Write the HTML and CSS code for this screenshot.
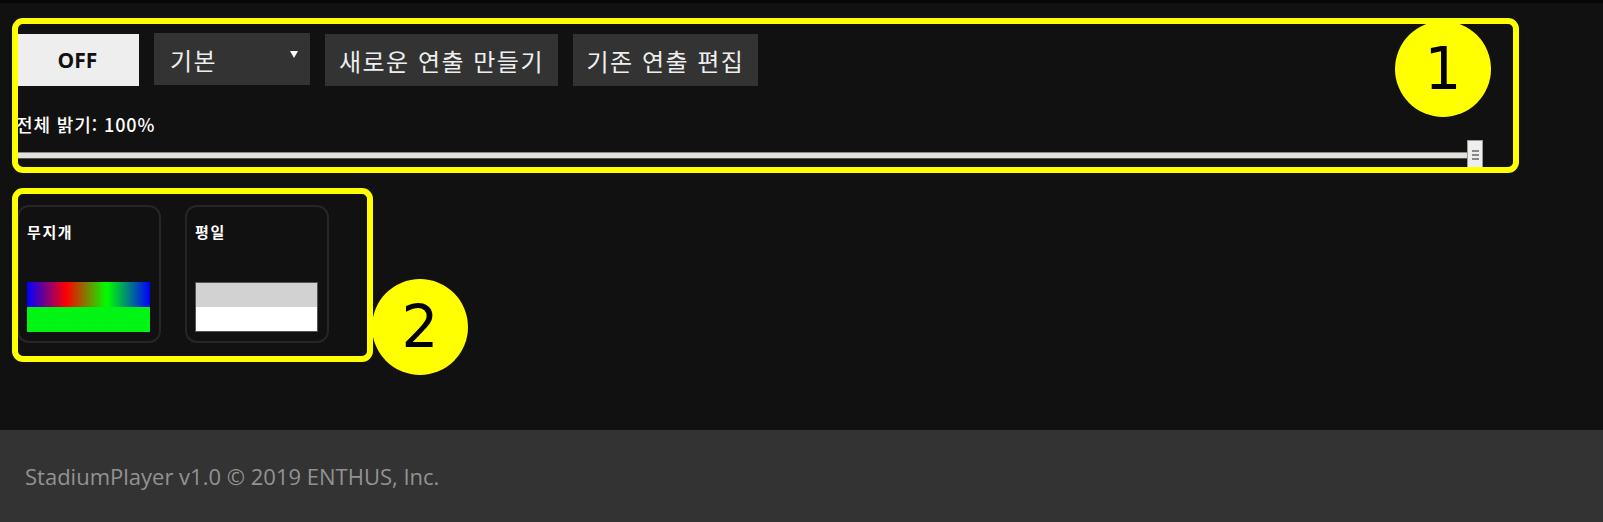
FILE: index.html
```html
<!DOCTYPE html>
<html lang="ko">
<head>
<meta charset="utf-8">
<title>StadiumPlayer</title>
<link rel="stylesheet" href="styles.css">
</head>
<body>
<div class="topbar"></div>
<main class="main">
  <section class="controls">
    <div class="btn-row">
      <button class="btn btn-off">OFF</button>
      <div class="select">
        <span>기본</span>
        <svg class="caret" width="8" height="7" viewBox="0 0 8 7"><polygon points="0,0 8,0 4,7" fill="#fff"/></svg>
      </div>
      <button class="btn btn-dark btn-new">새로운 연출 만들기</button>
      <button class="btn btn-dark btn-edit">기존 연출 편집</button>
    </div>
    <div class="label">전체 밝기: 100%</div>
    <div class="slider">
      <div class="track"></div>
      <div class="thumb"><i></i><i></i><i></i></div>
    </div>
  </section>
  <section class="presets">
    <div class="card">
      <div class="card-title">무지개</div>
      <div class="preview">
        <div class="half rainbow"></div>
        <div class="half green"></div>
      </div>
    </div>
    <div class="card">
      <div class="card-title">평일</div>
      <div class="preview preview-plain">
        <div class="half grey"></div>
        <div class="half white"></div>
      </div>
    </div>
  </section>
</main>
<footer class="footer">StadiumPlayer v1.0 © 2019 ENTHUS, Inc.</footer>

<div class="anno anno-1"></div>
<div class="anno anno-2"></div>
<div class="badge badge-1">1</div>
<div class="badge badge-2">2</div>
</body>
</html>
```
FILE: styles.css
```css
html, body {
  margin: 0;
  padding: 0;
}
body {
  background: #111111;
  font-family: "Noto Sans CJK KR", "Open Sans", sans-serif;
  color: #fff;
  width: 1603px;
  height: 522px;
  overflow: hidden;
  position: relative;
}
.topbar {
  height: 3px;
  background: #060606;
}
.main {
  height: 427px;
  box-sizing: border-box;
}
.controls {
  padding: 31px 120px 0 16px;
}
.btn-row {
  display: flex;
  gap: 15px;
  align-items: flex-start;
}
.btn {
  border: none;
  margin: 0;
  height: 52px;
  padding: 0;
  font-family: "Noto Sans CJK KR", sans-serif;
  cursor: pointer;
}
.btn-off {
  width: 123px;
  background: #eeeeee;
  color: #111;
  font-family: "Open Sans", sans-serif;
  font-weight: 700;
  font-size: 21px;
}
.select {
  width: 156px;
  height: 52px;
  margin-top: -1px;
  background: #333333;
  box-sizing: border-box;
  padding: 0 10px 0 16px;
  display: flex;
  align-items: center;
  justify-content: space-between;
  font-size: 24px;
  letter-spacing: 1.5px;
  color: #eee;
}
.caret {
  margin-top: -10px;
  margin-right: 2px;
}
.btn-dark {
  background: #333333;
  color: #eee;
  font-size: 24px;
  letter-spacing: 1.5px;
}
.btn-new { width: 233px; }
.btn-edit { width: 185px; }
.label {
  margin-top: 27px;
  font-size: 18px;
  line-height: 22px;
  letter-spacing: 0.9px;
  font-weight: 500;
  color: #fff;
}
.slider {
  margin-top: 5px;
  height: 30px;
  display: flex;
  align-items: center;
}
.track {
  flex: 1;
  height: 5px;
  background: #e4e1dc;
  border-top: 1px solid #8a8a8a;
  border-bottom: 1px solid #555;
  margin-right: -8px;
}
.thumb {
  width: 14px;
  height: 28px;
  background: #eeeeee;
  border: 1px solid #9a9a9a;
  display: flex;
  flex-direction: column;
  align-items: center;
  justify-content: center;
  gap: 2px;
  position: relative;
}
.thumb i {
  display: block;
  width: 7px;
  height: 2px;
  background: #888;
}
.presets {
  display: flex;
  gap: 24px;
  padding: 35px 0 0 17px;
}
.card {
  width: 144px;
  height: 138px;
  box-sizing: border-box;
  border: 2px solid #262626;
  border-radius: 12px;
  padding: 17px 8px 9px 8px;
  display: flex;
  flex-direction: column;
}
.card-title {
  font-size: 15px;
  font-weight: 700;
  line-height: 16px;
  letter-spacing: 1.6px;
  color: #fff;
}
.preview {
  margin-top: auto;
  width: 123px;
  height: 50px;
  display: flex;
  flex-direction: column;
}
.preview-plain {
  box-sizing: border-box;
  border: 1px solid #555;
}
.half {
  flex: 1;
}
.rainbow {
  background: linear-gradient(to right, #0000ff 0%, #ff0000 32%, #00ff00 65%, #0000ff 100%);
}
.green { background: #00f514; }
.grey { background: #d2d2d2; }
.white { background: #ffffff; }
.footer {
  height: 92px;
  background: #333333;
  color: #929292;
  font-family: "Open Sans", sans-serif;
  font-size: 22px;
  display: flex;
  align-items: center;
  padding-left: 25px;
  box-sizing: border-box;
}

/* annotation overlays */
.anno {
  position: absolute;
  border: 6px solid #ffff00;
  border-radius: 11px;
  box-sizing: border-box;
}
.anno-1 {
  left: 12px;
  top: 18px;
  width: 1507px;
  height: 155px;
}
.anno-2 {
  left: 12px;
  top: 188px;
  width: 361px;
  height: 174px;
}
.badge {
  position: absolute;
  width: 96px;
  height: 96px;
  border-radius: 50%;
  background: #ffff00;
  color: #000;
  font-family: "DejaVu Sans", sans-serif;
  font-size: 58px;
  display: flex;
  align-items: center;
  justify-content: center;
}
.badge-1 {
  left: 1395px;
  top: 21px;
}
.badge-2 {
  left: 372px;
  top: 279px;
}
```
